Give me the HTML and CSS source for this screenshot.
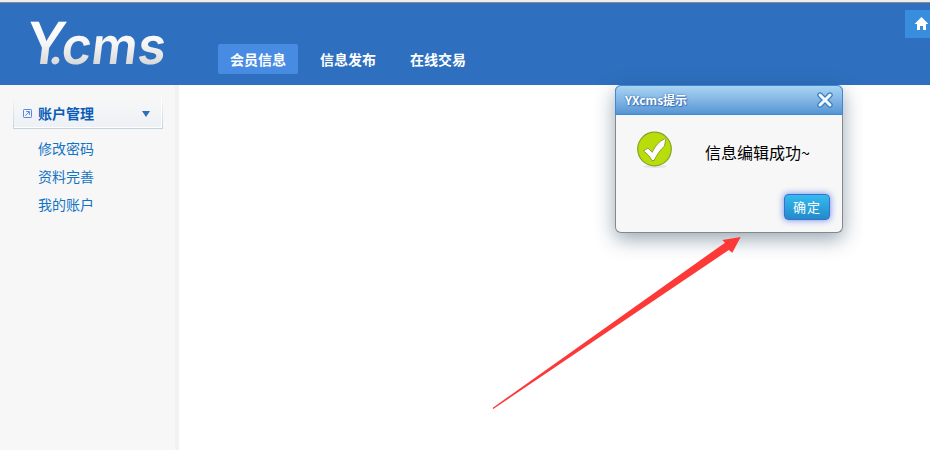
FILE: index.html
```html
<!DOCTYPE html>
<html lang="zh-CN">
<head>
<meta charset="utf-8">
<title>YXcms</title>
<link rel="stylesheet" href="styles.css">
</head>
<body>
<header class="header">
  <svg class="logo" width="144" height="56" viewBox="0 0 144 56" role="img" aria-label="Y.cms">
    <defs>
      <linearGradient id="silver" x1="0" y1="12" x2="0" y2="54" gradientUnits="userSpaceOnUse">
        <stop offset="0" stop-color="#fff"/><stop offset=".5" stop-color="#f5f5f5"/><stop offset="1" stop-color="#d8d8d8"/>
      </linearGradient>
    </defs>
    <g class="logo-text" fill="url(#silver)" transform="translate(6 53) skewX(-7)">
      <g transform="translate(0 -53)">
        <text class="logo-cap" x="-6" y="53" textLength="39" lengthAdjust="spacingAndGlyphs">Y</text>
        <text class="logo-dot" x="17" y="53">.</text>
        <text class="logo-low" x="30" y="53" textLength="104" lengthAdjust="spacingAndGlyphs">cms</text>
      </g>
    </g>
  </svg>
  <nav class="nav">
    <a class="nav-item active">会员信息</a>
    <a class="nav-item">信息发布</a>
    <a class="nav-item">在线交易</a>
  </nav>
  <a class="home" aria-label="首页">
    <svg width="13" height="13" viewBox="0 0 13 13"><path fill="#fff" d="M6.5 0 13 6.5V7H11v6H8V9H5v4H2V7H0v-.5z"/></svg>
  </a>
</header>
<div class="body">
  <aside class="sidebar">
    <div class="group">
      <svg class="group-icon" width="9" height="9" viewBox="0 0 9 9" fill="none" stroke="#5b86e8"><rect x=".5" y=".5" width="8" height="8" rx=".7"/><path d="M2.3 6.7 6 3M3.2 2.5h3.3v3.3"/></svg>
      <span class="group-title">账户管理</span>
      <svg class="caret" width="8" height="6" viewBox="0 0 8 6"><path fill="#2b70bd" d="M0 0h8L4 6z"/></svg>
    </div>
    <ul class="menu">
      <li>修改密码</li>
      <li>资料完善</li>
      <li>我的账户</li>
    </ul>
  </aside>
  <main class="content"></main>
</div>
<section class="dialog" role="dialog">
  <div class="dialog-head">
    <span class="dialog-title">YXcms提示</span>
    <svg width="16" height="16" viewBox="0 0 16 16" fill="none" stroke-linecap="round"><path stroke="#397fc3" stroke-width="5.4" d="m3 3 10 10M13 3 3 13"/><path stroke="#f4f8fc" stroke-width="3" d="m3 3 10 10M13 3 3 13"/></svg>
  </div>
  <div class="dialog-body">
    <svg class="ok" width="36" height="38" viewBox="0 0 36 38"><ellipse cx="18" cy="35.5" rx="12" ry="1.5" fill="#e4e4e4"/><circle cx="17.5" cy="18" r="16.8" fill="#b9dd0b" stroke="#83a52c" stroke-width="1.2"/><path d="M6.5 20 11 17l4.2 4.3C18 15 22 10.3 28 7.5l.7 1L27.500 15C23.500 18.500 20 23.500 17 29.500h-2C13 25.500 10 22.500 6.500 20z" fill="#fff" stroke="#829b2b" stroke-width=".9"/></svg>
    <p class="message">信息编辑成功~</p>
  </div>
  <div class="dialog-foot"><button class="confirm">确定</button></div>
</section>
<svg class="arrow" width="252" height="175" viewBox="0 0 252 175"><path fill="#fd3938" d="M.5 172 233 6.700 230.300 4 248.700 1 240.300 16.700 236.800 14 1.200 173z"/></svg>
</body>
</html>
```
FILE: styles.css
```css
* { box-sizing: border-box; }
body {
  margin: 0;
  height: 450px;
  overflow: hidden;
  position: relative;
  display: flex;
  flex-direction: column;
  background: #fff;
  font: 14px/28px "Noto Sans CJK SC", sans-serif;
}
.header {
  height: 85px;
  flex: none;
  display: flex;
  align-items: flex-start;
  background: #2e70bf;
  border-top: 3px solid #8b8b8b;
  border-image: linear-gradient(#ededed 0 2px, #8b8b8b 2px 3px) 3 0 0 0;
}
.logo { margin: 8px 0 0 24px; overflow: visible; }
.logo-text { font-family: Inter, sans-serif; font-weight: 600; }
.logo-cap { font-size: 58px; }
.logo-dot { font-size: 50px; }
.logo-low { font-size: 51px; }
.nav { display: flex; gap: 10px; margin: 41px 0 0 50px; }
.nav-item {
  width: 80px;
  height: 30px;
  line-height: 31px;
  text-align: center;
  color: #fff;
  font-weight: 700;
  border-radius: 2px;
}
.nav-item.active { background: #488be3; }
.home {
  width: 25px;
  height: 28px;
  margin: 7px 0 0 auto;
  padding: 7px 0 0 10px;
  line-height: 0;
  background: #398ddd;
}
.body { flex: 1; display: flex; }
.sidebar {
  width: 179px;
  padding: 13px 12px 0 13px;
  background: #f7f7f7;
  border-right: 4px solid #f2f2f2;
}
.group {
  width: 150px;
  height: 31px;
  display: flex;
  align-items: center;
  padding: 0 12px 0 9px;
  border: 1px solid;
  border-top: 0;
  border-image: linear-gradient(#f7f7f7, #c5d2da) 1;
  background: linear-gradient(#f7f7f7, #edf1f5);
  box-shadow: inset -1px -1px #fff;
}
.group-icon { margin-right: 6px; }
.group-title { flex: 1; color: #0a5cb8; font-weight: 700; }
.caret { margin-top: 2px; }
.menu { list-style: none; margin: 5px 0 0 25px; padding: 0; color: #1474c4; }
.content { flex: 1; }
.dialog {
  position: absolute;
  left: 615px;
  top: 85px;
  width: 228px;
  height: 148px;
  display: flex;
  flex-direction: column;
  border: 1px solid #858889;
  border-top: 0;
  border-radius: 6px;
  background: #f7f7f7;
  box-shadow: 0 6px 20px rgba(25, 55, 85, .45);
}
.dialog-head {
  height: 30px;
  margin: 0 -1px;
  padding: 0 9px;
  display: flex;
  align-items: center;
  justify-content: space-between;
  border: 1px solid #3d89d3;
  border-radius: 6px 6px 0 0;
  background: linear-gradient(#a9d4f3, #82b6e4 50%, #5695d4);
}
.dialog-title {
  color: #fff;
  font-size: 12px;
  font-weight: 700;
  text-shadow: 0 0 2px #2c65b1, 1px 1px 1px #3c77bd;
}
.dialog-body { display: flex; padding: 16px 0 0 21px; }
.message { margin: 7px 0 0 32px; font-size: 16px; color: #000; }
.dialog-foot { display: flex; justify-content: flex-end; margin: auto 12px 12px 0; }
.confirm {
  width: 46px;
  height: 26px;
  padding: 0;
  border: 1px solid #386fd0;
  border-radius: 4px;
  background: linear-gradient(#33bbef, #238aca);
  box-shadow: 0 0 7px #6685e5;
  color: #fff;
  font: 13px/24px "Noto Sans CJK SC", sans-serif;
  letter-spacing: 1px;
}
.arrow { position: absolute; left: 492px; top: 236px; }
```
